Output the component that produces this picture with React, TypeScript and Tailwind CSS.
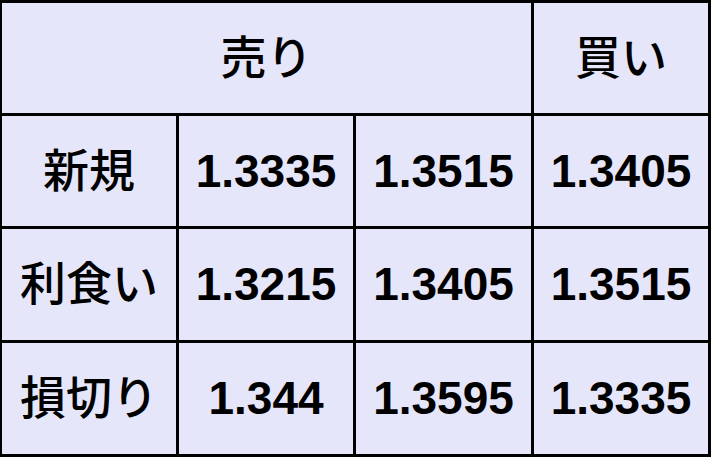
const rows = [
  { label: "新規", values: ["1.3335", "1.3515", "1.3405"] },
  { label: "利食い", values: ["1.3215", "1.3405", "1.3515"] },
  { label: "損切り", values: ["1.344", "1.3595", "1.3335"] },
];

export default function App() {
  return (
    <div className="w-[711px] h-[457px] bg-black pt-[3px] pr-[3px] pb-[3px] pl-[2px] font-['Liberation_Sans','Noto_Sans_CJK_JP',sans-serif] text-[46px] text-black">
      <div className="grid h-full grid-cols-[174px_174px_175px_174px] grid-rows-[110px_110px_111px_111px] gap-[3px]">
        <div className="col-span-3 flex items-center justify-center bg-[#e6e6fa] font-medium">売り</div>
        <div className="flex items-center justify-center bg-[#e6e6fa] font-medium">買い</div>
        {rows.map((row) => (
          <>
            <div key={row.label} className="flex items-center justify-center bg-[#e6e6fa] font-medium">
              {row.label}
            </div>
            {row.values.map((v, i) => (
              <div key={row.label + i} className="flex items-center justify-center bg-[#e6e6fa] font-bold">
                {v}
              </div>
            ))}
          </>
        ))}
      </div>
    </div>
  );
}
